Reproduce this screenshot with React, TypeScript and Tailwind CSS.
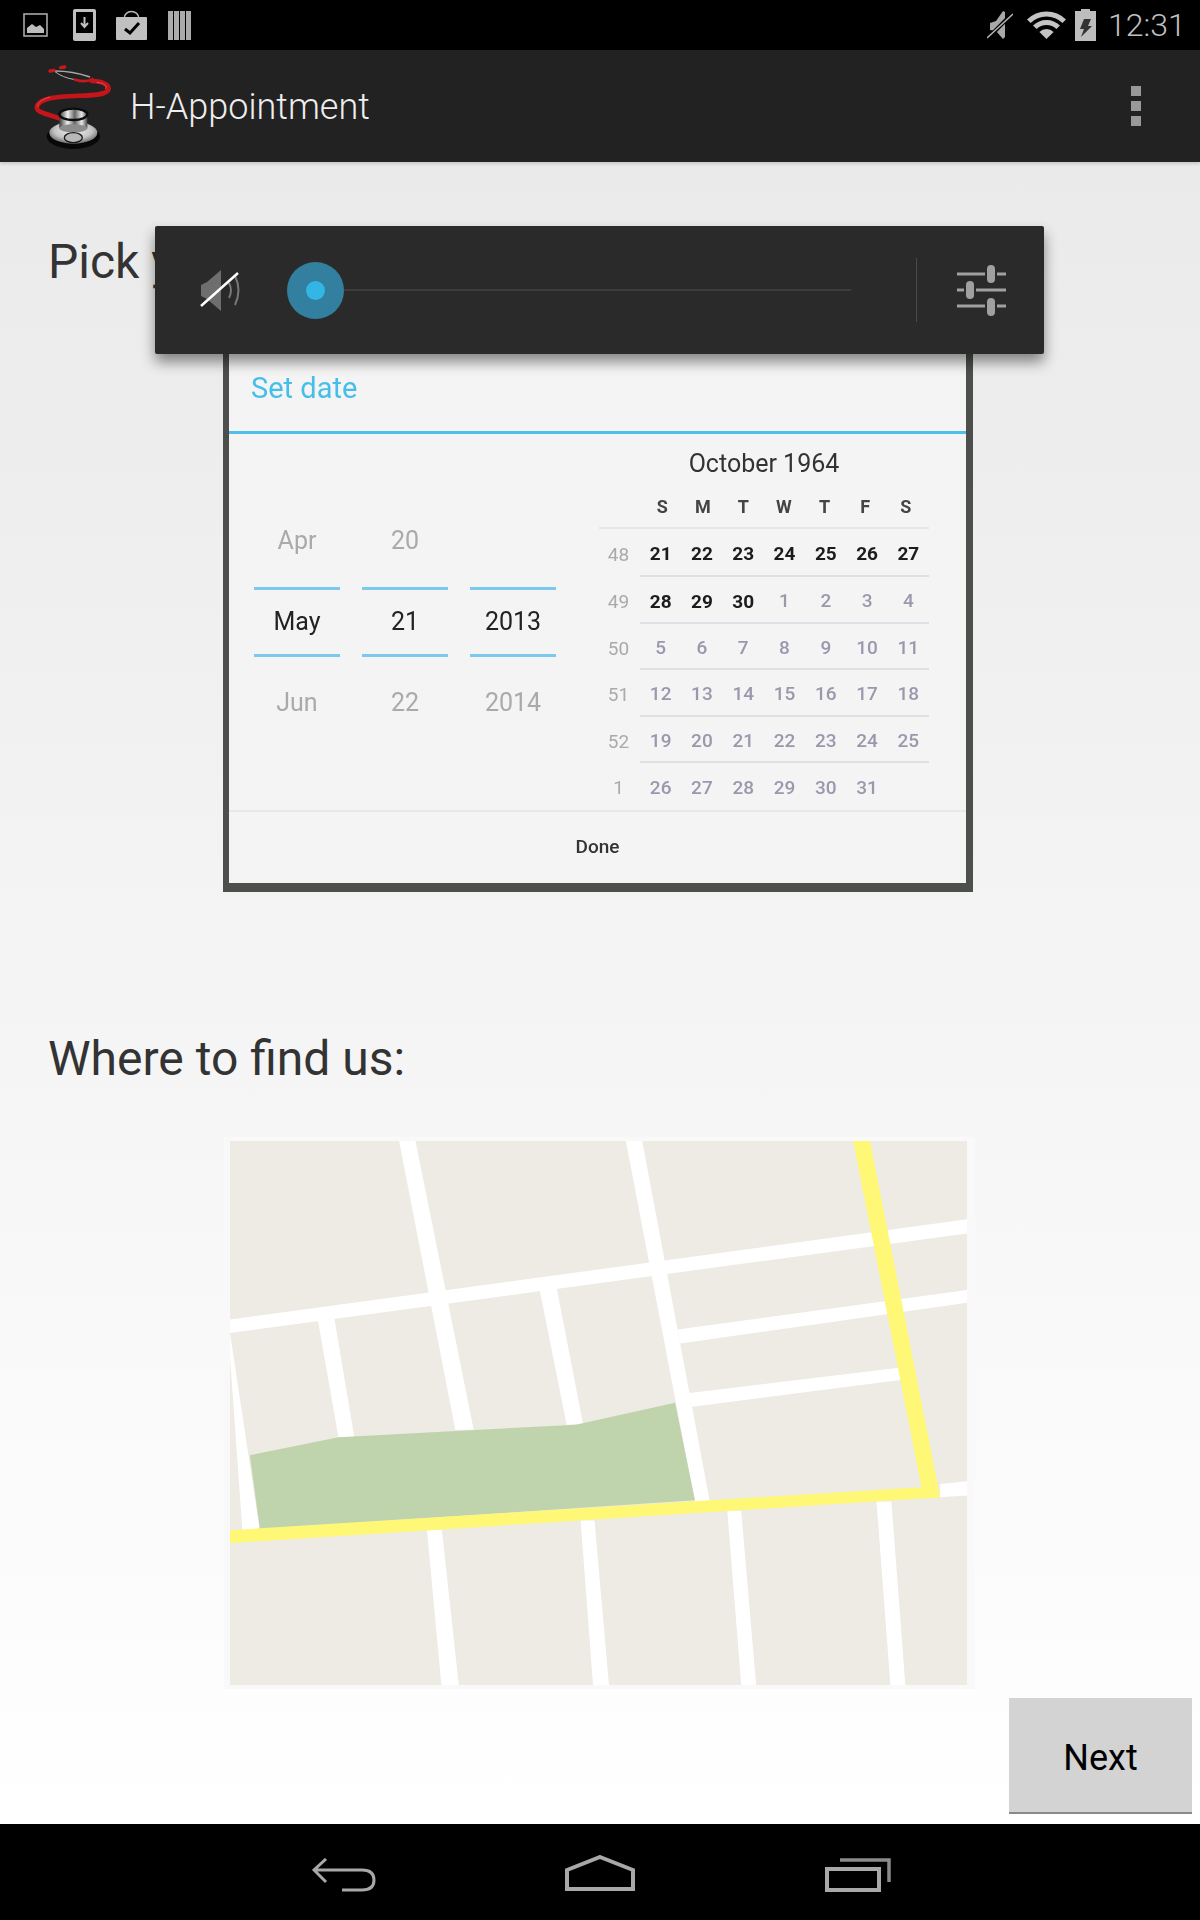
const rows = [
  { week: "48", days: ["21", "22", "23", "24", "25", "26", "27"], strong: 7 },
  { week: "49", days: ["28", "29", "30", "1", "2", "3", "4"], strong: 3 },
  { week: "50", days: ["5", "6", "7", "8", "9", "10", "11"], strong: 0 },
  { week: "51", days: ["12", "13", "14", "15", "16", "17", "18"], strong: 0 },
  { week: "52", days: ["19", "20", "21", "22", "23", "24", "25"], strong: 0 },
  { week: "1", days: ["26", "27", "28", "29", "30", "31", ""], strong: 0 },
];

const pickers = [
  { prev: "Apr", cur: "May", next: "Jun" },
  { prev: "20", cur: "21", next: "22" },
  { prev: "", cur: "2013", next: "2014" },
];

const whiteRoads = [
  "380,55 413,55 530,810 493,810",
  "836,55 869,55 1005,1000 975,1000",
  "40,522 1522,260 1522,297 40,557",
  "940,548 1522,445 1522,478 945,585",
  "960,715 1385,648 1388,680 970,750",
  "40,557 100,1075 65,1075 40,620",
  "217,525 250,520 290,830 258,830",
  "663,447 697,440 750,795 717,797",
  "1468,952 1522,945 1522,982 1468,987",
  "436,1072 466,1072 500,1478 465,1478",
  "745,1048 773,1048 802,1478 770,1478",
  "1040,1022 1068,1022 1098,1478 1068,1478",
  "1340,998 1370,998 1398,1478 1368,1478",
];

function StatusLeft() {
  return (
    <div className="flex items-center">
      <svg width="25" height="24" viewBox="0 0 25 24" className="ml-[23px]">
        <rect x="1" y="1" width="23" height="22" fill="none" stroke="#a8a8a8" strokeWidth="1.6" />
        <path d="M4 20V15L9 11L13 14L17 12L21 16V20Z" fill="#bdbdbd" />
      </svg>
      <svg width="23" height="32" viewBox="0 0 23 32" className="ml-[25px]">
        <rect width="23" height="32" rx="2" fill="#c0c0c0" />
        <rect x="3" y="3" width="17" height="21" fill="#000" />
        <path d="M11.5 8V17M8 14L11.5 18L15 14" fill="none" stroke="#c0c0c0" strokeWidth="2" />
      </svg>
      <svg width="31" height="30" viewBox="0 0 31 30" className="ml-[20px]">
        <path d="M8 9C8 -1 23 -1 23 9" fill="none" stroke="#b8b8b8" strokeWidth="1.4" />
        <rect y="7" width="31" height="23" rx="1" fill="#c0c0c0" />
        <path d="M9 19L14 23L23 13" fill="none" stroke="#000" strokeWidth="3" />
      </svg>
      <div className="ml-[21px] flex h-[29px] gap-px">
        <div className="w-[5px] bg-[#aaaaaa]" />
        <div className="w-[5px] bg-[#aaaaaa]" />
        <div className="w-[5px] bg-[#aaaaaa]" />
        <div className="w-[5px] bg-[#aaaaaa]" />
      </div>
    </div>
  );
}

function StatusRight() {
  return (
    <div className="mr-[12px] flex items-center">
      <svg width="26" height="32" viewBox="0 0 26 32">
        <path d="M3 14L9 12L16 2L18 3V28L16 30L9 22L3 21Z" fill="#a8a8a8" />
        <path d="M1 29L25 5" stroke="#000" strokeWidth="4" />
        <path d="M0 29L26 5" stroke="#b4b4b4" strokeWidth="1.6" />
      </svg>
      <svg width="39" height="30" viewBox="0 0 39 30" className="ml-[14px]">
        <path d="M1.8 11.3A25 25 0 0 1 37.2 11.3" fill="none" stroke="#c4c4c4" strokeWidth="5" />
        <path d="M7.8 17.3A16.5 16.5 0 0 1 31.2 17.3" fill="none" stroke="#c4c4c4" strokeWidth="5" />
        <path d="M19.5 29L12.4 21.9A10 10 0 0 1 26.6 21.9Z" fill="#c4c4c4" />
      </svg>
      <svg width="21" height="32" viewBox="0 0 21 32" className="ml-[9px]">
        <path d="M6 0H15V2H21V32H0V2H6Z" fill="#bdbdbd" />
        <path d="M9 10H16L13 17H17L6 28L9 20H5Z" fill="#333" />
      </svg>
      <span className="ml-[12px] w-[80px] text-[32px] font-light leading-none text-[#c0c0c0]">12:31</span>
    </div>
  );
}

function Logo() {
  return (
    <svg width="100" height="110" viewBox="0 0 300 330">
      <defs>
        <linearGradient id="chrome" x1="0" y1="0" x2="1" y2="0">
          <stop offset="0" stopColor="#3a3a3a" />
          <stop offset="0.3" stopColor="#f0f0f0" />
          <stop offset="0.55" stopColor="#666" />
          <stop offset="0.8" stopColor="#e8e8e8" />
          <stop offset="1" stopColor="#444" />
        </linearGradient>
        <radialGradient id="dish" cx="0.5" cy="0.4" r="0.65">
          <stop offset="0" stopColor="#f4f4f4" />
          <stop offset="0.6" stopColor="#c4c4c4" />
          <stop offset="1" stopColor="#555" />
        </radialGradient>
      </defs>
      <ellipse cx="160" cy="256" rx="80" ry="38" fill="#000" opacity="0.75" />
      <path d="M105 60C135 60 175 66 210 78" fill="none" stroke="#a8a8a8" strokeWidth="5" />
      <path d="M105 62C120 74 140 82 165 86" fill="none" stroke="#b0b0b0" strokeWidth="3" />
      <path d="M165 86C185 92 205 92 217 84" fill="none" stroke="#c8181c" strokeWidth="8" strokeLinecap="round" />
      <path d="M90 60L102 58M122 50L134 48" stroke="#c8181c" strokeWidth="10" strokeLinecap="round" />
      <path d="M215 90C250 90 272 104 264 118C248 142 150 128 90 142C48 152 42 172 60 182C85 194 110 196 128 206" fill="none" stroke="#c3151a" strokeWidth="14" strokeLinecap="round" />
      <path d="M230 94C255 96 262 106 256 114M90 138C62 146 52 156 54 168" fill="none" stroke="#e8555a" strokeWidth="2.5" />
      <ellipse cx="160" cy="245" rx="72" ry="33" fill="url(#dish)" />
      <rect x="118" y="190" width="84" height="42" fill="url(#chrome)" />
      <ellipse cx="160" cy="232" rx="42" ry="12" fill="#8c8c8c" />
      <ellipse cx="160" cy="190" rx="42" ry="17" fill="url(#chrome)" stroke="#0c0c0c" strokeWidth="7" />
      <ellipse cx="160" cy="260" rx="27" ry="15" fill="#b8b8b8" stroke="#1a1a1a" strokeWidth="4" />
    </svg>
  );
}

function DateCard() {
  return (
    <div className="ml-[223px] mt-[42px] w-[750px] border-b-[9px] border-l-[6px] border-r-[7px] border-[#4c4f4b] bg-[#f4f4f4] blur-[0.4px]">
      <div className="flex h-[101px] items-end pb-[26px] pl-[22px] text-[29px] leading-[34px] text-[#45bfea]">Set date</div>
      <div className="h-[3px] bg-[#4fc0e8]" />
      <div className="flex h-[376px] justify-between pr-[37px]">
        <div className="ml-[25px] mt-[77px] flex gap-[22px]">
          {pickers.map((p) => (
            <div key={p.cur} className="w-[86px] text-center text-[25px]">
              <div className="flex h-[60px] items-center justify-center text-[#aaaaaa]">{p.prev}</div>
              <div className="mt-[16px] flex h-[70px] items-center justify-center border-y-[3px] border-[#7cc9ee] font-[450] text-[#222222]">{p.cur}</div>
              <div className="mt-[16px] flex h-[60px] items-center justify-center text-[#aaaaaa]">{p.next}</div>
            </div>
          ))}
        </div>
        <div className="w-[330px]">
          <div className="mt-[13px] text-center text-[25px] leading-[34px] text-[#333333]">October 1964</div>
          <div className="ml-[43px] mr-[3px] mt-[9px] grid h-[38px] grid-cols-7 pt-[3px] text-center text-[18px] font-bold leading-[28px] text-[#444444]">
            {["S", "M", "T", "W", "T", "F", "S"].map((d, i) => (
              <span key={i}>{d}</span>
            ))}
          </div>
          <div className="mt-[-1px] h-[2px] bg-[#e6e6e6]" />
          {rows.map((r, i) => (
            <div key={r.week} className={i === 0 ? "flex h-[48px]" : "flex h-[46.5px]"}>
              <span className="flex w-[41px] items-center justify-center pr-[2px] pt-[4px] text-[19px] text-[#aaaaaa]">{r.week}</span>
              <div className={i < 5 ? "grid flex-1 grid-cols-7 border-b-2 border-[#e0dfe6]" : "grid flex-1 grid-cols-7"}>
                {r.days.map((d, j) => (
                  <span
                    key={j}
                    className={
                      j < r.strong
                        ? "flex items-center justify-center pt-[5px] text-[19px] font-bold text-[#1c1c1c]"
                        : "flex items-center justify-center pt-[4px] text-[19px] font-medium text-[#9a98ac]"
                    }
                  >
                    {d}
                  </span>
                ))}
              </div>
            </div>
          ))}
        </div>
      </div>
      <div className="flex h-[73px] items-center justify-center border-t-2 border-[#e8e8e8] text-[19px] font-medium text-[#333333]">Done</div>
    </div>
  );
}

function MapPanel() {
  return (
    <div className="ml-[224px] mt-[52px] w-[751px] bg-[#f9f9f9] p-[4px] pl-[6px]">
      <svg width="737" height="544" viewBox="40 55 1482 1423" preserveAspectRatio="none" className="block blur-[0.5px]">
        <rect x="40" y="55" width="1482" height="1423" fill="#edebe4" />
        {whiteRoads.map((p) => (
          <polygon key={p} points={p} fill="#ffffff" />
        ))}
        <polygon points="80,877 258,830 735,797 935,740 975,995 100,1070" fill="#bfd4ac" />
        <polygon points="1293,55 1327,55 1468,987 1435,990" fill="#fff776" />
        <polygon points="40,1073 1435,960 1468,987 40,1107" fill="#fff776" />
      </svg>
    </div>
  );
}

function VolumePanel() {
  return (
    <div className="absolute left-[155px] top-[64px] flex h-[128px] w-[889px] items-center rounded-[2px] bg-[#2a2a2a] shadow-[0_8px_14px_rgba(0,0,0,0.45)]">
      <svg width="44" height="46" viewBox="0 0 44 46" className="ml-[43px]">
        <path d="M3 18L9 15L23 3V44L9 32L3 29Z" fill="#6e6e6e" />
        <path d="M31 16Q35 23 31 31M37 9Q44 23 37 38" fill="none" stroke="#777" strokeWidth="2" />
        <path d="M3 39L40 6" stroke="#fff" strokeWidth="2.5" />
      </svg>
      <div className="ml-[45px] flex w-[564px] items-center">
        <div className="flex h-[57px] w-[57px] shrink-0 items-center justify-center rounded-full bg-[#327f9f]">
          <div className="h-[19px] w-[19px] rounded-full bg-[#33b5e5]" />
        </div>
        <div className="h-[2px] flex-1 bg-[#3c3c3c]" />
      </div>
      <div className="ml-[65px] h-[64px] w-px bg-[#4a4a4a]" />
      <svg width="49" height="51" viewBox="0 0 49 51" className="ml-[40px]">
        <path d="M0 9H28M40 9H49M0 25H7M19 25H49M0 41H28M40 41H49" stroke="#a0a0a0" strokeWidth="3" />
        <rect x="30" y="0" width="8" height="18" rx="4" fill="#a0a0a0" />
        <rect x="9" y="16" width="8" height="18" rx="4" fill="#a0a0a0" />
        <rect x="30" y="33" width="8" height="18" rx="4" fill="#a0a0a0" />
      </svg>
    </div>
  );
}

function NavBar() {
  return (
    <div className="flex h-[96px] shrink-0 items-start bg-black">
      <svg width="64" height="34" viewBox="0 0 64 34" className="ml-[312px] mt-[34px]">
        <path d="M14 1L2 12L14 24M2 12H50Q62 12 62 22Q62 32 50 32H30" fill="none" stroke="#a8a8a8" strokeWidth="3" />
      </svg>
      <svg width="70" height="36" viewBox="0 0 70 36" className="ml-[189px] mt-[31px]">
        <path d="M35 2L68 15V34H2V15Z" fill="none" stroke="#a8a8a8" strokeWidth="4" />
      </svg>
      <svg width="66" height="34" viewBox="0 0 66 34" className="ml-[190px] mt-[34px]">
        <path d="M15 2H64V24" fill="none" stroke="#8a8a8a" strokeWidth="3.5" />
        <rect x="2" y="11" width="52" height="21" fill="none" stroke="#a8a8a8" strokeWidth="4" />
      </svg>
    </div>
  );
}

export default function App() {
  return (
    <div className="flex h-[1920px] w-[1200px] flex-col overflow-hidden bg-white [font-family:Roboto,sans-serif]">
      <div className="flex h-[50px] shrink-0 items-center justify-between bg-black">
        <StatusLeft />
        <StatusRight />
      </div>

      <div className="z-10 flex h-[112px] shrink-0 items-center bg-[#222222] pl-[20px] shadow-[0_2px_3px_rgba(0,0,0,0.15)]">
        <Logo />
        <span className="ml-[10px] pt-[2px] text-[36px] font-light text-[#eeeeee]">H-Appointment</span>
        <div className="ml-auto mr-[59px] flex flex-col gap-[5px]">
          <div className="h-[10px] w-[10px] bg-[#999999]" />
          <div className="h-[10px] w-[10px] bg-[#999999]" />
          <div className="h-[10px] w-[10px] bg-[#999999]" />
        </div>
      </div>

      <div className="relative flex-1 bg-gradient-to-b from-[#eaeaea] to-white">
        <h1 className="ml-[48px] mt-[74px] text-[48px] font-normal leading-[52px] text-[#333333]">Pick your date:</h1>
        <DateCard />
        <h2 className="ml-[48px] mt-[141px] text-[48px] font-normal leading-[52px] text-[#333333]">Where to find us:</h2>
        <MapPanel />
        <div className="mt-[9px] flex justify-end pr-[8px]">
          <button className="h-[116px] w-[183px] border-b-2 border-[#8a8a8a] bg-[#d3d3d3] pt-[6px] text-[36px] text-black">Next</button>
        </div>
        <VolumePanel />
      </div>

      <NavBar />
    </div>
  );
}
